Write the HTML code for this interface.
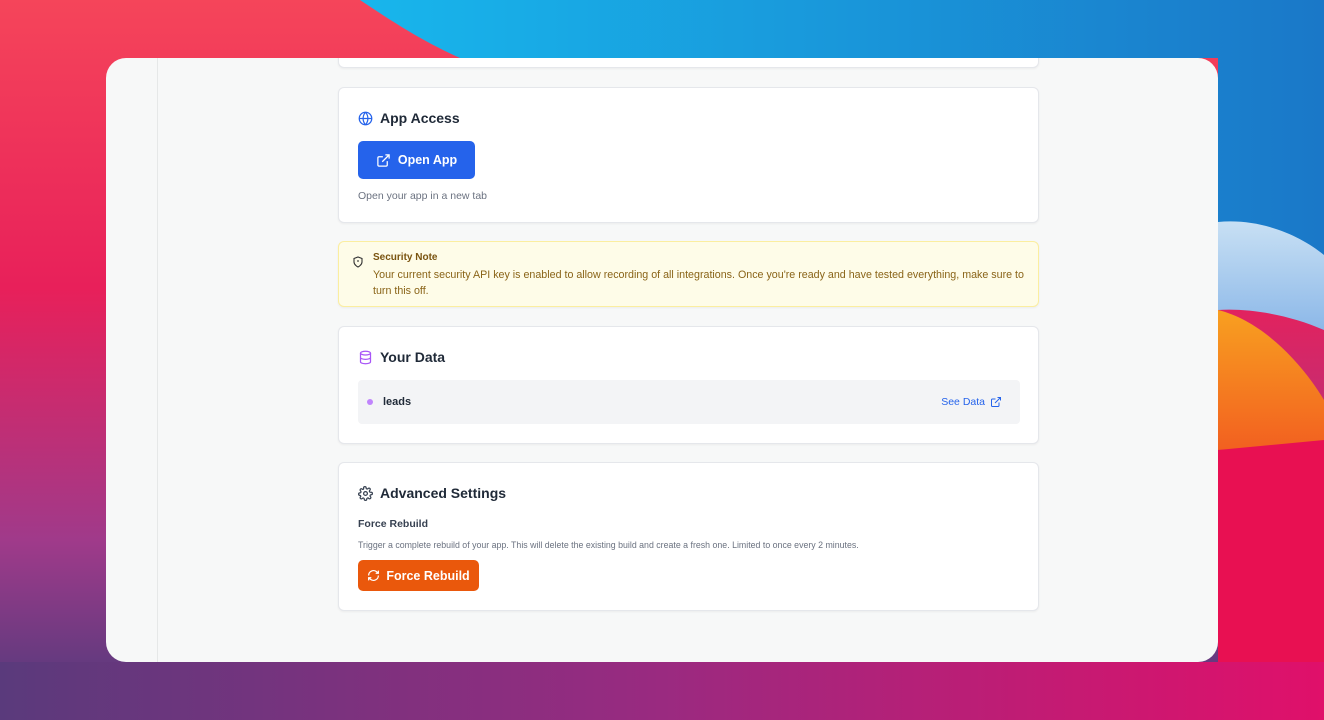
<!DOCTYPE html>
<html><head><meta charset="utf-8">
<style>
*{box-sizing:border-box;margin:0;padding:0}
body{width:1324px;height:720px;overflow:hidden;position:relative;font-family:"Liberation Sans",sans-serif;background:#c0185a}
.bg{position:absolute;inset:0}
.win{position:absolute;left:106px;top:58px;width:1112px;height:604px;background:#f7f8f8;border-radius:20px;overflow:hidden}
.side{position:absolute;left:51px;top:0;bottom:0;width:1px;background:#e6e8e8}
.card{position:absolute;left:232px;width:701px;background:#fff;border:1px solid #e5e7eb;border-radius:6px;box-shadow:0 1px 2px rgba(0,0,0,.05)}
.h{position:absolute;left:19px;display:flex;align-items:center;font-size:14px;font-weight:bold;color:#1f2937}
.h svg{margin-right:7px}
.btn{position:absolute;left:19px;display:flex;align-items:center;justify-content:center;color:#fff;font-size:12.5px;font-weight:bold;border-radius:5px}
</style></head><body>
<svg class="bg" width="1324" height="720" viewBox="0 0 1324 720">
<defs>
<linearGradient id="g1" x1="0" y1="0" x2="0" y2="1"><stop offset="0" stop-color="#f5455a"/><stop offset=".4" stop-color="#e8205a"/><stop offset=".75" stop-color="#a03a8a"/><stop offset="1" stop-color="#4a3a7a"/></linearGradient>
<linearGradient id="g2" x1="0" y1="0" x2="1" y2="0"><stop offset="0" stop-color="#18b6ec"/><stop offset="1" stop-color="#1a78c8"/></linearGradient>
<linearGradient id="g3" x1="0" y1="0" x2="0" y2="1"><stop offset="0" stop-color="#c8e0f4"/><stop offset="1" stop-color="#8cb8e8"/></linearGradient>
<linearGradient id="g4" x1="0" y1="0" x2="0" y2="1"><stop offset="0" stop-color="#f8a020"/><stop offset="1" stop-color="#f26020"/></linearGradient>
<linearGradient id="g5" x1="0" y1="0" x2="1" y2="0"><stop offset="0" stop-color="#5a3a7c"/><stop offset=".5" stop-color="#9a2a80"/><stop offset="1" stop-color="#e0106a"/></linearGradient>
</defs>
<rect width="1324" height="720" fill="url(#g1)"/>
<path d="M360 0 L1324 0 L1324 260 L1218 240 L1218 58 L460 58 C420 40 390 20 360 0Z" fill="url(#g2)"/>
<path d="M1218 222 C1260 218 1300 235 1324 255 L1324 330 C1290 315 1250 308 1218 310Z" fill="url(#g3)"/>
<path d="M1218 310 C1260 320 1300 360 1324 400 L1324 445 L1218 450Z" fill="url(#g4)"/>
<path d="M1218 450 L1324 440 L1324 720 L1218 720Z" fill="#e81052"/>
<rect x="0" y="662" width="1324" height="58" fill="url(#g5)"/>
</svg>
<div class="win">
<div class="side"></div>
<div class="card" style="top:-10px;height:20px"></div>
<div class="card" style="top:29px;height:136px">
 <div class="h" style="top:22px"><svg width="15" height="15" viewBox="0 0 24 24" fill="none" stroke="#2563eb" stroke-width="2"><circle cx="12" cy="12" r="10"/><path d="M2 12h20M12 2a15 15 0 0 1 0 20M12 2a15 15 0 0 0 0 20"/></svg>App Access</div>
 <div class="btn" style="top:53px;width:117px;height:38px;background:#2563eb"><svg width="15" height="15" viewBox="0 0 24 24" fill="none" stroke="#fff" stroke-width="2" style="margin-right:7px"><path d="M18 13v6a2 2 0 0 1-2 2H5a2 2 0 0 1-2-2V8a2 2 0 0 1 2-2h6M15 3h6v6M10 14 21 3"/></svg>Open App</div>
 <div style="position:absolute;left:19px;top:102px;font-size:10.5px;color:#6b7280">Open your app in a new tab</div>
</div>
<div class="card" style="top:183px;height:66px;background:#fefce8;border-color:#fbeea0">
 <svg style="position:absolute;left:13px;top:14px" width="12" height="12" viewBox="0 0 24 24" fill="none" stroke="#333" stroke-width="2.2"><path d="M12 22s8-4 8-10V5l-8-3-8 3v7c0 6 8 10 8 10z"/><path d="M12 8v4M12 16h.01"/></svg>
 <div style="position:absolute;left:34px;top:10px;font-size:10px;font-weight:bold;color:#7a5410">Security Note</div>
 <div style="position:absolute;left:34px;top:25px;width:660px;font-size:10.7px;line-height:16px;color:#8a6418">Your current security API key is enabled to allow recording of all integrations. Once you're ready and have tested everything, make sure to turn this off.</div>
</div>
<div class="card" style="top:268px;height:118px">
 <div class="h" style="top:22px"><svg width="15" height="15" viewBox="0 0 24 24" fill="none" stroke="#a855f7" stroke-width="2"><ellipse cx="12" cy="5" rx="8" ry="3"/><path d="M4 5v14c0 1.7 3.6 3 8 3s8-1.3 8-3V5M4 12c0 1.7 3.6 3 8 3s8-1.3 8-3"/></svg>Your Data</div>
 <div style="position:absolute;left:19px;top:53px;width:662px;height:44px;background:#f3f4f6;border-radius:4px">
  <div style="position:absolute;left:9px;top:19px;width:6px;height:6px;border-radius:50%;background:#c084fc"></div>
  <div style="position:absolute;left:25px;top:16px;font-size:11px;font-weight:bold;color:#1f2937">leads</div>
  <div style="position:absolute;right:18px;top:16px;font-size:10.5px;color:#2563eb;display:flex;align-items:center">See Data<svg width="12" height="12" viewBox="0 0 24 24" fill="none" stroke="#2563eb" stroke-width="2" style="margin-left:5px"><path d="M18 13v6a2 2 0 0 1-2 2H5a2 2 0 0 1-2-2V8a2 2 0 0 1 2-2h6M15 3h6v6M10 14 21 3"/></svg></div>
 </div>
</div>
<div class="card" style="top:404px;height:149px">
 <div class="h" style="top:22px"><svg width="15" height="15" viewBox="0 0 24 24" fill="none" stroke="#374151" stroke-width="2"><circle cx="12" cy="12" r="3"/><path d="M19.4 15a1.7 1.7 0 0 0 .3 1.8l.1.1a2 2 0 1 1-2.8 2.8l-.1-.1a1.7 1.7 0 0 0-2.9 1.2V21a2 2 0 1 1-4 0v-.1a1.7 1.7 0 0 0-2.9-1.2l-.1.1a2 2 0 1 1-2.8-2.8l.1-.1A1.7 1.7 0 0 0 3 15H3a2 2 0 1 1 0-4h.1a1.7 1.7 0 0 0 1.2-2.9l-.1-.1a2 2 0 1 1 2.8-2.8l.1.1A1.7 1.7 0 0 0 9 4.6V3a2 2 0 1 1 4 0v.1a1.7 1.7 0 0 0 2.9 1.2l.1-.1a2 2 0 1 1 2.8 2.8l-.1.1a1.7 1.7 0 0 0 1.2 2.9H21a2 2 0 1 1 0 4h-.1a1.7 1.7 0 0 0-1.5 1z"/></svg>Advanced Settings</div>
 <div style="position:absolute;left:19px;top:55px;font-size:10.5px;font-weight:bold;color:#374151">Force Rebuild</div>
 <div style="position:absolute;left:19px;top:77px;font-size:8.8px;color:#6b7280">Trigger a complete rebuild of your app. This will delete the existing build and create a fresh one. Limited to once every 2 minutes.</div>
 <div class="btn" style="top:97px;width:121px;height:31px;background:#ea580c"><svg width="13" height="13" viewBox="0 0 24 24" fill="none" stroke="#fff" stroke-width="2.2" style="margin-right:6px"><path d="M21 12a9 9 0 0 1-15 6.7L3 16M3 12a9 9 0 0 1 15-6.7L21 8M21 3v5h-5M3 21v-5h5"/></svg>Force Rebuild</div>
</div>
</div>
</body></html>
